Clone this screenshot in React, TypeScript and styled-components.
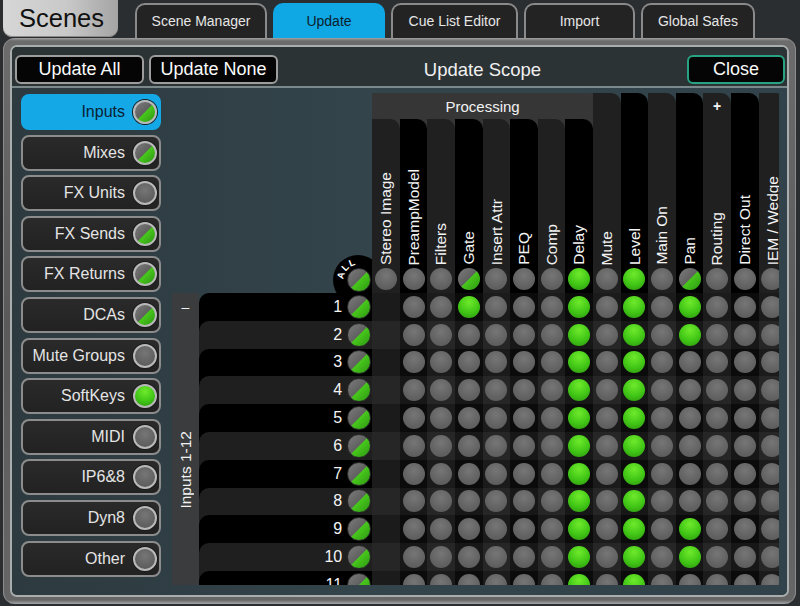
import * as React from "react";
import styled, { createGlobalStyle } from "styled-components";

type Lamp = "off" | "on" | "half";

const GlobalStyle = createGlobalStyle`
  html, body {
    margin: 0;
    padding: 0;
    background: #2b2e30;
  }

  body {
    font-family: "Liberation Sans", Arial, sans-serif;
  }

  * {
    box-sizing: border-box;
  }
`;

const lampFill: Record<Lamp, string> = {
  off: "radial-gradient(circle at 50% 35%, #767676 0%, #626262 60%, #575757 100%)",
  on: "radial-gradient(circle at 50% 28%, #6fea2c 0%, #41c616 55%, #2b9210 100%)",
  half:
    "linear-gradient(135deg, #7c7c7c 0%, #606060 49.5%, #48c81c 50.5%, #2c9612 100%)",
};

const LampDot = styled.div<{ $state: Lamp; $size: number; $ring?: "light" | "dark" }>`
  flex: none;
  width: ${(p) => p.$size}px;
  height: ${(p) => p.$size}px;
  border-radius: 50%;
  background: ${(p) => lampFill[p.$state]};
  border: ${(p) =>
    p.$ring === "light" ? "2px solid #b9b9b9" : p.$ring === "dark" ? "1px solid #2a2a2a" : "none"};
  box-shadow: ${(p) => (p.$ring === "light" ? "0 0 0 1px #1c1c1c" : "none")};
`;

const Page = styled.div`
  width: 800px;
  height: 606px;
  overflow: hidden;
  display: flex;
  flex-direction: column;
  background: #2b2e30;
`;

const Header = styled.div`
  height: 38px;
  flex: none;
  display: flex;
  align-items: flex-end;
  padding-left: 3px;
`;

const SceneTitle = styled.div`
  align-self: flex-start;
  width: 115px;
  height: 37px;
  padding-left: 16px;
  line-height: 37px;
  font-size: 25.5px;
  color: #111;
  border-radius: 0 0 9px 9px;
  background: linear-gradient(to right, #d6d6d6 0%, #c9c9c9 55%, #a4a4a4 100%);
  box-shadow: inset 0 -1px 0 #8a8a8a;
`;

const Tabs = styled.div`
  display: flex;
  align-items: flex-end;
  gap: 6px;
  margin-left: 17px;
`;

const Tab = styled.div<{ $width: number; $active?: boolean }>`
  width: ${(p) => p.$width}px;
  height: 35px;
  display: flex;
  align-items: center;
  justify-content: center;
  padding-bottom: 1px;
  font-size: 14px;
  color: ${(p) => (p.$active ? "#0c1d2b" : "#e6e6e6")};
  background: ${(p) => (p.$active ? "#10a7e5" : "#232323")};
  border: 2px solid ${(p) => (p.$active ? "#10a7e5" : "#8a8a8a")};
  border-bottom: none;
  border-radius: 10px 10px 0 0;
`;

const Frame = styled.div`
  flex: 1;
  min-height: 0;
  margin: 0 4px 2px 3px;
  padding: 7px;
  border-radius: 12px;
  background: linear-gradient(
    180deg,
    #a2a2a2 0px,
    #6c6c6c 3px,
    #5a5a5a 50%,
    #666 calc(100% - 4px),
    #a6a6a6 100%
  );
  box-shadow: inset 1px 0 0 #8c8c8c, inset -1px 0 0 #8c8c8c;
`;

const Panel = styled.div`
  height: 100%;
  display: flex;
  flex-direction: column;
  overflow: hidden;
  border: 2px solid #a9adae;
  border-radius: 7px;
  background: #2f3c41;
`;

const TopBar = styled.div`
  height: 41px;
  flex: none;
  display: flex;
  align-items: flex-start;
  gap: 5px;
  padding: 8px 2px 0 3px;
  background: #2b3335;
  border-bottom: 2px solid #7b888c;
`;

const ActionButton = styled.div<{ $width: number; $accent?: boolean }>`
  width: ${(p) => p.$width}px;
  height: 29px;
  display: flex;
  align-items: center;
  justify-content: center;
  font-size: 18px;
  color: #fafafa;
  background: #050505;
  border: 2px solid ${(p) => (p.$accent ? "#27a282" : "#9d9d9d")};
  border-radius: 6px;
`;

const ScopeTitle = styled.div`
  flex: 1;
  text-align: center;
  line-height: 29px;
  font-size: 18.5px;
  color: #f0f0f0;
`;

const Body = styled.div`
  flex: 1;
  min-height: 0;
  overflow: hidden;
  display: flex;
  gap: 11px;
  padding: 6px 8px 10px 9px;
  background: linear-gradient(to right, #2d3a3f 0%, #33444b 45%, #31424a 100%);
`;

const Sidebar = styled.div`
  width: 140px;
  flex: none;
  display: grid;
  grid-auto-rows: 36px;
  row-gap: 4.6px;
  align-content: start;
`;

const SideButton = styled.div<{ $active?: boolean }>`
  display: flex;
  align-items: center;
  justify-content: flex-end;
  gap: 8px;
  padding-right: 2px;
  font-size: 16px;
  color: ${(p) => (p.$active ? "#0c2233" : "#e4e4e4")};
  background: ${(p) => (p.$active ? "#14a8e7" : "linear-gradient(#2a2a2a, #222)")};
  border: 2px solid ${(p) => (p.$active ? "#14a8e7" : "#8c8c8c")};
  border-radius: 8px;
`;

const Matrix = styled.div`
  flex: 1;
  min-width: 0;
  min-height: 0;
  margin-top: -1px;
  position: relative;
  overflow: hidden;
  display: grid;
  grid-template-columns: 27px 173.2px repeat(15, 27.6px);
  grid-template-rows: 26px 174px repeat(12, 27.8px);
`;

const LeftHead = styled.div`
  grid-column: 1 / span 2;
  grid-row: 1 / span 2;
  position: relative;
  overflow: hidden;
`;

const AllBadge = styled.div`
  position: absolute;
  right: 0;
  bottom: 0;
  width: 50px;
  height: 50px;

  svg {
    display: block;
  }

  ${LampDot} {
    position: absolute;
    right: 1px;
    bottom: 1px;
  }
`;

const ProcessingGroup = styled.div`
  grid-column: 3 / span 8;
  grid-row: 1 / span 2;
  display: grid;
  grid-template-columns: repeat(8, 27.6px);
  grid-template-rows: 26px 1fr;
  background: #363636;
`;

const GroupTitle = styled.div`
  grid-column: 1 / -1;
  display: flex;
  align-items: center;
  justify-content: center;
  font-size: 15px;
  color: #f2f2f2;
`;

const ColumnHead = styled.div<{ $dark: boolean }>`
  display: flex;
  flex-direction: column;
  align-items: center;
  justify-content: flex-end;
  gap: 3px;
  padding-bottom: 3px;
  background: ${(p) => (p.$dark ? "#202020" : "#000")};
  border-top-right-radius: 10px;
`;

const ColumnLabel = styled.span`
  writing-mode: vertical-rl;
  transform: rotate(180deg);
  white-space: nowrap;
  line-height: 1;
  font-size: 15.5px;
  color: #f4f4f4;
`;

const PlusMark = styled.span`
  margin-bottom: auto;
  padding-top: 5px;
  font-size: 14px;
  font-weight: bold;
  color: #f4f4f4;
`;

const GroupCell = styled.div`
  grid-column: 1;
  grid-row: 3 / span 12;
  display: flex;
  flex-direction: column;
  align-items: center;
  padding-bottom: 8px;
  background: #3a3c3d;
  color: #f2f2f2;
`;

const Collapse = styled.div`
  height: 28px;
  line-height: 28px;
  font-size: 14px;
`;

const GroupName = styled.div`
  flex: 1;
  display: flex;
  align-items: center;

  span {
    writing-mode: vertical-rl;
    transform: rotate(180deg);
    white-space: nowrap;
    font-size: 15.5px;
  }
`;

const RowSlot = styled.div<{ $under: string }>`
  grid-column: 2;
  background: ${(p) => p.$under};
`;

const RowLabel = styled.div<{ $bg: string }>`
  height: 100%;
  display: flex;
  align-items: center;
  justify-content: flex-end;
  gap: 5px;
  padding-right: 1px;
  font-size: 16px;
  color: #f4f4f4;
  background: ${(p) => p.$bg};
  border-top-left-radius: 10px;
`;

const Cell = styled.div<{ $bg: string }>`
  display: flex;
  align-items: center;
  justify-content: center;
  background: ${(p) => p.$bg};
`;

type Column = { name: string; head: Lamp; proc: boolean; plus?: boolean };

const columns: Column[] = [
  { name: "Stereo Image", head: "off", proc: true },
  { name: "PreampModel", head: "off", proc: true },
  { name: "Filters", head: "off", proc: true },
  { name: "Gate", head: "half", proc: true },
  { name: "Insert Attr", head: "off", proc: true },
  { name: "PEQ", head: "off", proc: true },
  { name: "Comp", head: "off", proc: true },
  { name: "Delay", head: "on", proc: true },
  { name: "Mute", head: "off", proc: false },
  { name: "Level", head: "on", proc: false },
  { name: "Main On", head: "off", proc: false },
  { name: "Pan", head: "half", proc: false },
  { name: "Routing", head: "off", proc: false, plus: true },
  { name: "Direct Out", head: "off", proc: false },
  { name: "IEM / Wedge", head: "off", proc: false },
];

const sideItems: { label: string; lamp: Lamp }[] = [
  { label: "Inputs", lamp: "half" },
  { label: "Mixes", lamp: "half" },
  { label: "FX Units", lamp: "off" },
  { label: "FX Sends", lamp: "half" },
  { label: "FX Returns", lamp: "half" },
  { label: "DCAs", lamp: "half" },
  { label: "Mute Groups", lamp: "off" },
  { label: "SoftKeys", lamp: "on" },
  { label: "MIDI", lamp: "off" },
  { label: "IP6&8", lamp: "off" },
  { label: "Dyn8", lamp: "off" },
  { label: "Other", lamp: "off" },
];

const tabs = [
  { label: "Scene Manager", width: 132 },
  { label: "Update", width: 112, active: true },
  { label: "Cue List Editor", width: 127 },
  { label: "Import", width: 111 },
  { label: "Global Safes", width: 114 },
];

const ROWS = 11;
const panOn = [1, 2, 9, 10];

function cellState(row: number, col: number): Lamp | null {
  if (col === 0) return null;
  if (col === 7 || col === 9) return "on";
  if (col === 3 && row === 1) return "on";
  if (col === 11 && panOn.includes(row)) return "on";
  return "off";
}

function rowBg(row: number) {
  return row % 2 === 1 ? "#000" : "#1f1f1f";
}

function cellBg(row: number, col: number) {
  const darkCol = col % 2 === 0;
  const blackRow = row % 2 === 1;
  if (darkCol) return blackRow ? "#1b1b1b" : "#262626";
  return blackRow ? "#0b0b0b" : "#171717";
}

function SceneHeader() {
  return (
    <Header>
      <SceneTitle>Scenes</SceneTitle>
      <Tabs>
        {tabs.map((t) => (
          <Tab key={t.label} $width={t.width} $active={t.active}>
            {t.label}
          </Tab>
        ))}
      </Tabs>
    </Header>
  );
}

function AllToggle() {
  return (
    <AllBadge>
      <svg width="50" height="50" viewBox="0 0 50 50">
        <circle cx="36" cy="37" r="25" fill="#000" />
        <path id="allArc" d="M 21.5 36.5 A 15.5 15.5 0 0 1 44.75 23.58" fill="none" />
        <text
          fill="#fff"
          fontSize="9.5"
          fontWeight="bold"
          letterSpacing="1"
          fontFamily="'Liberation Sans', Arial, sans-serif"
        >
          <textPath href="#allArc">ALL</textPath>
        </text>
      </svg>
      <LampDot $state="half" $size={24} $ring="dark" />
    </AllBadge>
  );
}

function renderHead(col: Column, i: number) {
  return (
    <ColumnHead
      key={col.name}
      $dark={i % 2 === 0}
      style={col.proc ? undefined : { gridColumn: i + 3, gridRow: "1 / span 2" }}
    >
      {col.plus && <PlusMark>+</PlusMark>}
      <ColumnLabel>{col.name}</ColumnLabel>
      <LampDot $state={col.head} $size={22} />
    </ColumnHead>
  );
}

function UpdateMatrix() {
  const rows = Array.from({ length: ROWS }, (_, i) => i + 1);
  return (
    <Matrix>
      <LeftHead>
        <AllToggle />
      </LeftHead>

      <ProcessingGroup>
        <GroupTitle>Processing</GroupTitle>
        {columns.filter((c) => c.proc).map((c, i) => renderHead(c, i))}
      </ProcessingGroup>

      {columns.map((c, i) => (c.proc ? null : renderHead(c, i)))}

      <GroupCell>
        <Collapse>–</Collapse>
        <GroupName>
          <span>Inputs 1-12</span>
        </GroupName>
      </GroupCell>

      {rows.map((r) => (
        <React.Fragment key={r}>
          <RowSlot $under={r === 1 ? "transparent" : rowBg(r - 1)} style={{ gridRow: r + 2 }}>
            <RowLabel $bg={rowBg(r)}>
              {r}
              <LampDot $state="half" $size={24} $ring="dark" />
            </RowLabel>
          </RowSlot>
          {columns.map((c, ci) => {
            const state = cellState(r, ci);
            return (
              <Cell
                key={c.name}
                $bg={cellBg(r, ci)}
                style={{ gridRow: r + 2, gridColumn: ci + 3 }}
              >
                {state && <LampDot $state={state} $size={22} />}
              </Cell>
            );
          })}
        </React.Fragment>
      ))}
    </Matrix>
  );
}

export default function App() {
  return (
    <>
      <GlobalStyle />
      <Page>
        <SceneHeader />
        <Frame>
          <Panel>
            <TopBar>
              <ActionButton $width={129}>Update All</ActionButton>
              <ActionButton $width={129}>Update None</ActionButton>
              <ScopeTitle>Update Scope</ScopeTitle>
              <ActionButton $width={98} $accent>
                Close
              </ActionButton>
            </TopBar>
            <Body>
              <Sidebar>
                {sideItems.map((s, i) => (
                  <SideButton key={s.label} $active={i === 0}>
                    {s.label}
                    <LampDot $state={s.lamp} $size={24} $ring="light" />
                  </SideButton>
                ))}
              </Sidebar>
              <UpdateMatrix />
            </Body>
          </Panel>
        </Frame>
      </Page>
    </>
  );
}
